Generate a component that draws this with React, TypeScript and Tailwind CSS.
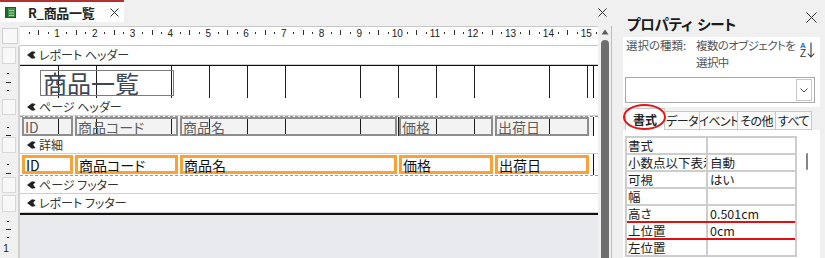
import React from "react";

const STEP = 37.8;
const NUMS = Array.from({ length: 15 }, (_, i) => i + 1);

function TopRuler() {
  const o = -0.8;
  return (
    <svg width="578" height="18" className="block">
      {NUMS.map((n) => {
        const x0 = o + STEP * (n - 1);
        return (
          <g key={n}>
            <rect x={Math.round(x0 + STEP * 0.25)} y={5} width={1} height={2} fill="#333" />
            <rect x={Math.round(x0 + STEP * 0.5)} y={3} width={1} height={5} fill="#333" />
            <rect x={Math.round(x0 + STEP * 0.75)} y={5} width={1} height={2} fill="#333" />
            <text
              x={x0 + STEP}
              y={9.5}
              fontSize={10}
              textAnchor="middle"
              fill="#222"
              fontFamily="Liberation Sans, sans-serif"
            >
              {n}
            </text>
          </g>
        );
      })}
      <rect x={Math.round(o + STEP * 15.25)} y={5} width={1} height={2} fill="#333" />
    </svg>
  );
}

function VMarks({ h, marks, one }: { h: number; marks: [number, number][]; one?: number }) {
  return (
    <svg width="18" height={h} className="block">
      {marks.map(([y, w], i) => (
        <rect key={i} x={w > 2 ? 6 : 7} y={y} width={w} height={1} fill="#222" />
      ))}
      {one !== undefined && (
        <text x={6} y={one + 4} fontSize={10} textAnchor="middle" fill="#222" fontFamily="Liberation Sans, sans-serif">
          1
        </text>
      )}
    </svg>
  );
}

function BarIcon() {
  return (
    <svg width="9" height="8" viewBox="0 0 9 8" className="shrink-0">
      <path d="M0 4 L5 0.3 L8.6 1 L6.2 3.8 L8.6 7 L5 7.7 Z" fill="#222" />
    </svg>
  );
}

function SectionBar({ label, h }: { label: string; h: string }) {
  return (
    <div className={`flex ${h}`}>
      <div className="flex w-[20px] shrink-0 border-r-2 border-[#d2d2d2] bg-[#f0f0f0] px-[2px] py-[1px]">
        <div className="flex-1 border border-[#d8d8d8] bg-[#f8f8f8]" />
      </div>
      <div className="flex w-[578px] items-center gap-[3px] border-b border-[#cfcfcf] bg-white pl-[7px] text-[12px] leading-none text-[#333]">
        <BarIcon />
        <span>{label}</span>
      </div>
    </div>
  );
}

function LeftMarks({ h, marks }: { h: number; marks: [number, number][] }) {
  return (
    <div className="w-[20px] shrink-0 border-r-2 border-[#d2d2d2] bg-[#f0f0f0]">
      <VMarks h={h} marks={marks} />
    </div>
  );
}

const GRID =
  "bg-[repeating-linear-gradient(90deg,transparent_0px,transparent_36.9px,#1e1e1e_36.9px,#1e1e1e_37.8px)] bg-[position:1px_0]";

const cols = [
  { label: "ID", w: "w-[51px]" },
  { label: "商品コード", w: "w-[103px]" },
  { label: "商品名", w: "w-[217px]" },
  { label: "価格", w: "w-[94px]" },
  { label: "出荷日", w: "w-[94px]" },
];

function ReportPane() {
  return (
    <div className="flex w-[612px] shrink-0 flex-col">
      {/* tab strip */}
      <div className="flex h-[22px] items-stretch justify-between">
        <div className="flex w-[124px] items-center border-t-2 border-[#b5302e] bg-white pl-[5px]">
          <svg width="11" height="11" viewBox="0 0 11 11" className="shrink-0">
            <rect x="0.5" y="0.5" width="10" height="10" fill="#3f8f45" stroke="#1d5a22" />
            <rect x="1" y="1" width="2" height="9" fill="#24662a" />
            <rect x="4" y="3" width="5" height="1" fill="#9fd0a2" />
            <rect x="4" y="5.5" width="5" height="1" fill="#9fd0a2" />
            <rect x="4" y="8" width="5" height="1" fill="#9fd0a2" />
          </svg>
          <span className="ml-[12px] text-[13px] font-bold leading-none tracking-[-0.3px] text-[#222]">R_商品一覧</span>
          <svg width="9" height="9" viewBox="0 0 9 9" className="ml-[16px]">
            <path d="M0.5 0.5 L8.5 8.5 M8.5 0.5 L0.5 8.5" stroke="#333" strokeWidth="1" />
          </svg>
        </div>
        <div className="flex items-center pr-[5px] pt-[2px]">
          <svg width="9" height="9" viewBox="0 0 9 9">
            <path d="M0.5 0.5 L8.5 8.5 M8.5 0.5 L0.5 8.5" stroke="#333" strokeWidth="1" />
          </svg>
        </div>
      </div>

      <div className="flex flex-1 pt-[4px]">
        <div className="flex w-[598px] flex-col">
          {/* ruler row */}
          <div className="flex h-[20px]">
            <div className="flex w-[20px] shrink-0 px-[2px] py-[2px]">
              <div className="flex-1 border border-[#d0d0d0] bg-[#f8f8f8]" />
            </div>
            <div className="w-[578px] border-y border-[#c8c8c8] bg-white">
              <TopRuler />
            </div>
          </div>

          <SectionBar label="レポート ヘッダー" h="h-[19px]" />
          {/* report header content */}
          <div className="flex h-[33px]">
            <LeftMarks h={33} marks={[[8, 2], [17, 5], [25, 2]]} />
            <div className="flex w-[578px] border-t border-[#111] bg-white">
              <div className={`w-[574px] border-r border-[#111] pl-[20px] pt-[4px] ${GRID}`}>
                <div className="flex h-[26px] w-[134px] items-center overflow-hidden border border-[#7c7c7c] pl-[2px] text-[24px] leading-[24px] text-[#3d4756]">
                  商品一覧
                </div>
              </div>
            </div>
          </div>

          <SectionBar label="ページ ヘッダー" h="h-[18px]" />
          {/* page header content */}
          <div className="flex h-[20px]">
            <LeftMarks h={20} marks={[[11, 2], [19, 5]]} />
            <div className="flex w-[578px] border-t border-dashed border-[#9a9a9a] bg-white">
              <div className={`flex w-[574px] gap-[2px] border-r border-[#111] bg-[#f3f3f3] pl-[2px] ${GRID}`}>
                {cols.map((c) => (
                  <div
                    key={c.label}
                    className={`${c.w} flex h-[19px] items-center border-2 border-[#8e8e8e] pl-[1px] text-[14px] leading-none text-[#5e5e5e]`}
                  >
                    {c.label}
                  </div>
                ))}
              </div>
            </div>
          </div>

          <SectionBar label="詳細" h="h-[18px]" />
          {/* detail content */}
          <div className="flex h-[22px]">
            <LeftMarks h={22} marks={[[10, 2], [19, 5]]} />
            <div className="flex w-[578px] border-b border-dashed border-[#9a9a9a] bg-white">
              <div className="flex w-[574px] gap-[2px] border-r border-[#111] pl-[2px] pt-[1px]">
                {cols.map((c) => (
                  <div
                    key={c.label}
                    className={`${c.w} flex h-[19px] items-center border-[3px] border-[#f6a33a] bg-white pl-[1px] text-[14px] leading-none text-[#111]`}
                  >
                    {c.label}
                  </div>
                ))}
              </div>
            </div>
          </div>

          <SectionBar label="ページ フッター" h="h-[18px]" />
          <SectionBar label="レポート フッター" h="h-[19px]" />

          <div className="flex flex-1">
            <div className="w-[20px] shrink-0 border-r-2 border-[#d2d2d2] bg-[#f0f0f0]">
              <VMarks h={44} marks={[[8, 2], [16, 5], [24, 2]]} one={35} />
            </div>
            <div className="w-[578px] border-t-2 border-[#111] bg-[#e8eaee]" />
          </div>
        </div>

        {/* vertical scrollbar */}
        <div className="flex w-[14px] flex-col items-center border-r border-[#bdbdbd] bg-[#f0f0f0] pt-[3px]">
          <svg width="8" height="6" viewBox="0 0 8 6">
            <path d="M4 0.5 L7.5 5.5 L0.5 5.5 Z" fill="#5e5e5e" />
          </svg>
          <div className="mt-[5px] w-[8px] flex-1 rounded-t-full bg-[#6e6e6e]" />
        </div>
      </div>
    </div>
  );
}

const props: { k: string; v: string; red?: boolean }[] = [
  { k: "書式", v: "" },
  { k: "小数点以下表示", v: "自動" },
  { k: "可視", v: "はい" },
  { k: "幅", v: "" },
  { k: "高さ", v: "0.501cm", red: true },
  { k: "上位置", v: "0cm", red: true },
  { k: "左位置", v: "" },
];

const tabs = [
  { t: "データ", w: "w-[35px]" },
  { t: "イベント", w: "w-[38px]" },
  { t: "その他", w: "w-[38px]" },
  { t: "すべて", w: "w-[36px]" },
];

function PropertySheet() {
  return (
    <div className="relative flex w-[213px] flex-col pl-[11px] pr-[5px]">
      <div className="flex h-[37px] justify-between">
        <div className="mt-[17px] flex pl-[4px] text-[14.5px] font-bold leading-none tracking-[-0.3px] text-[#1a1a1a]">
          <span>プロパティ</span>
          <span className="ml-[5px]">シート</span>
        </div>
        <svg width="11" height="11" viewBox="0 0 11 11" className="mr-[3px] mt-[12px]">
          <path d="M0.5 0.5 L10.5 10.5 M10.5 0.5 L0.5 10.5" stroke="#333" strokeWidth="1" />
        </svg>
      </div>

      <div className="flex flex-col bg-white pb-[4px]">
        <div className="flex h-[36px] justify-between pl-[3px] pr-[5px] text-[11.5px] leading-[17px] text-[#555]">
          <div className="flex">
            <span className="w-[70px] whitespace-nowrap">選択の種類:</span>
            <span className="whitespace-nowrap tracking-[-0.6px]">
              複数のオブジェクトを
              <br />
              選択中
            </span>
          </div>
          <div className="mt-[5px] flex items-start">
            <div className="flex flex-col items-center">
              <span className="text-[8px] font-bold leading-[7px] text-[#2a6fc9] [font-family:'Liberation_Sans',sans-serif]">A</span>
              <span className="text-[10px] leading-[9px] text-[#333] [font-family:'Liberation_Sans',sans-serif]">Z</span>
            </div>
            <svg width="8" height="16" viewBox="0 0 8 16" className="ml-[1px]">
              <path d="M4 0.5 L4 15 M0.8 11.5 L4 15 L7.2 11.5" stroke="#333" strokeWidth="1.1" fill="none" />
            </svg>
          </div>
        </div>

        <div className="mx-[2px] mt-[4px] flex h-[26px] w-[190px] items-center justify-end border border-[#a8a8a8] bg-white pr-[2px]">
          <div className="flex h-[22px] w-[16px] items-center justify-center border border-[#c8c8c8]">
            <svg width="8" height="5" viewBox="0 0 8 5">
              <path d="M0.5 0.5 L4 4 L7.5 0.5" stroke="#555" strokeWidth="1" fill="none" />
            </svg>
          </div>
        </div>
      </div>

      <div className="flex h-[23px] items-end bg-[#f0f0f0] pl-[2px] text-[12px] leading-none text-[#222]">
        <div className="flex h-[22px] w-[40px] items-center justify-center border border-b-0 border-[#c8c8c8] bg-white font-bold">
          書式
        </div>
        {tabs.map((t) => (
          <div
            key={t.t}
            className={`flex h-[19px] items-center justify-center overflow-hidden whitespace-nowrap border border-l-0 border-[#c8c8c8] bg-[#fbfbfb] tracking-[-0.6px] ${t.w}`}
          >
            {t.t}
          </div>
        ))}
      </div>

      <div className="flex flex-1 flex-col bg-white pt-[6px] pl-[2px]">
        <div className="flex">
          <div className="w-[172px] border-l-2 border-t-2 border-r-2 border-[#cdcdcd]">
            {props.map((p) => (
              <div
                key={p.k}
                className={`flex h-[17px] border-b-2 text-[12.5px] leading-[15px] text-[#222] ${
                  p.red ? "border-[#e01010]" : "border-[#cdcdcd]"
                }`}
              >
                <div className="w-[81px] overflow-hidden whitespace-nowrap border-r-2 border-[#cdcdcd] pl-[1px]">
                  {p.k}
                </div>
                <div className="flex-1 pl-[2px]">{p.v}</div>
              </div>
            ))}
          </div>
          <div className="w-[18px] pl-[9px] pt-[17px]">
            <div className="h-[17px] w-[2px] rounded-full bg-[#858585]" />
          </div>
        </div>
      </div>

      {/* annotation ellipse */}
      <div className="absolute left-[11px] top-[104px] h-[26px] w-[43px] rounded-[50%] border-2 border-[#e01818]" />
    </div>
  );
}

export default function App() {
  return (
    <div className="flex h-[258px] w-[825px] overflow-hidden bg-[#f0f0f0] font-['Noto_Sans_CJK_JP','Noto_Sans',sans-serif] [font-feature-settings:'palt']">
      <ReportPane />
      <PropertySheet />
    </div>
  );
}
